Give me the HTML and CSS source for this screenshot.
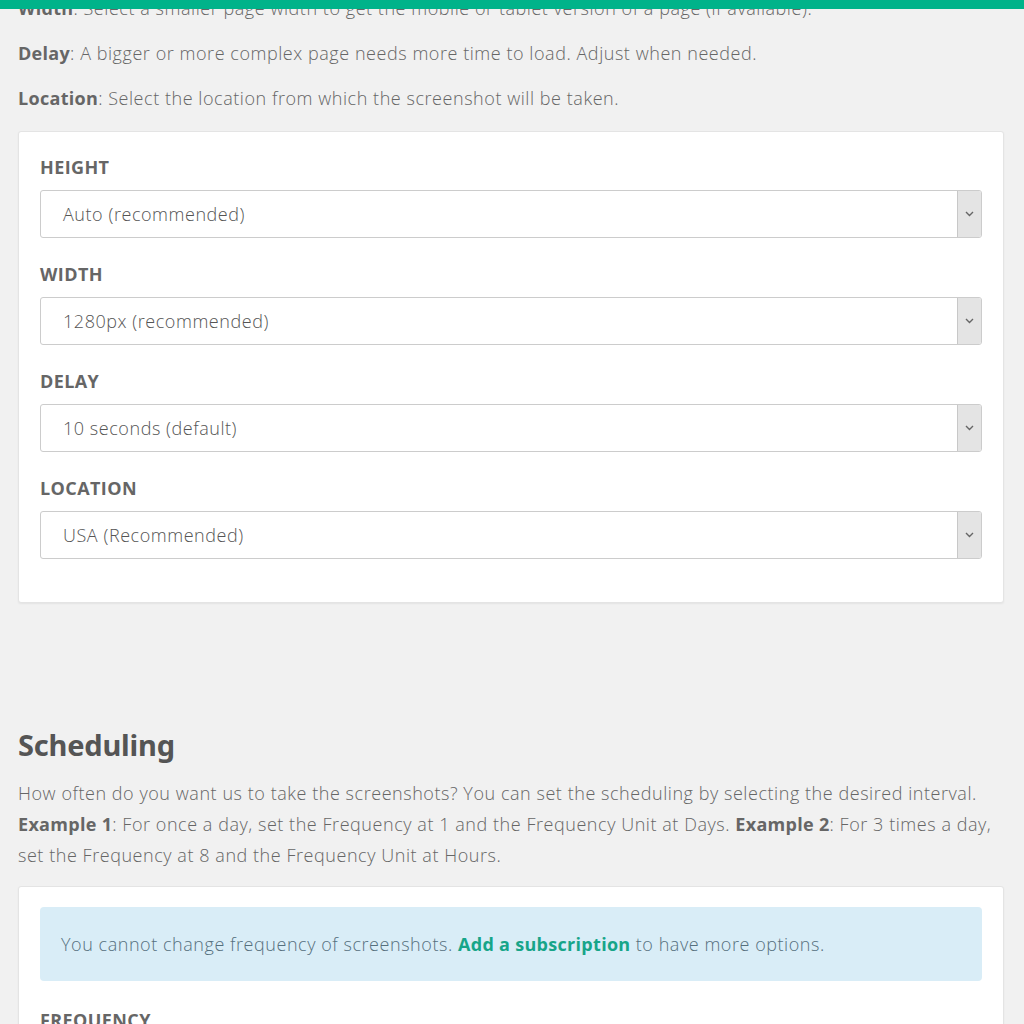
FILE: index.html
```html
<!DOCTYPE html>
<html lang="en">
<head>
    <meta charset="UTF-8">
    <meta name="viewport" content="width=device-width, initial-scale=1.0">
    <title>Screenshot settings</title>
    <link rel="stylesheet" href="styles.css">
</head>
<body>
    <div class="topbar"></div>

    <div class="page">
        <p class="hint"><b>Width</b>: Select a smaller page width to get the mobile or tablet version of a page (if available).</p>
        <p class="hint"><b>Delay</b>: A bigger or more complex page needs more time to load. Adjust when needed.</p>
        <p class="hint"><b>Location</b>: Select the location from which the screenshot will be taken.</p>

        <div class="card">
            <div class="field">
                <label>Height</label>
                <div class="select">
                    <span class="select-value">Auto (recommended)</span>
                    <span class="select-arrow"><svg width="9" height="6" viewBox="0 0 9 6"><path d="M1 1l3.5 3.5L8 1" fill="none" stroke="#666" stroke-width="1.4"/></svg></span>
                </div>
            </div>
            <div class="field">
                <label>Width</label>
                <div class="select">
                    <span class="select-value">1280px (recommended)</span>
                    <span class="select-arrow"><svg width="9" height="6" viewBox="0 0 9 6"><path d="M1 1l3.5 3.5L8 1" fill="none" stroke="#666" stroke-width="1.4"/></svg></span>
                </div>
            </div>
            <div class="field">
                <label>Delay</label>
                <div class="select">
                    <span class="select-value">10 seconds (default)</span>
                    <span class="select-arrow"><svg width="9" height="6" viewBox="0 0 9 6"><path d="M1 1l3.5 3.5L8 1" fill="none" stroke="#666" stroke-width="1.4"/></svg></span>
                </div>
            </div>
            <div class="field">
                <label>Location</label>
                <div class="select">
                    <span class="select-value">USA (Recommended)</span>
                    <span class="select-arrow"><svg width="9" height="6" viewBox="0 0 9 6"><path d="M1 1l3.5 3.5L8 1" fill="none" stroke="#666" stroke-width="1.4"/></svg></span>
                </div>
            </div>
        </div>

        <h2 class="section-title">Scheduling</h2>
        <p class="intro">How often do you want us to take the screenshots? You can set the scheduling by selecting the desired interval.<br>
            <b>Example 1</b>: For once a day, set the Frequency at 1 and the Frequency Unit at Days. <b>Example 2</b>: For 3 times a day, set the Frequency at 8 and the Frequency Unit at Hours.</p>

        <div class="card card-notice">
            <div class="alert"><span>You cannot change frequency of screenshots. <a href="#">Add a subscription</a> to have more options.</span></div>
            <div class="field">
                <label>Frequency</label>
            </div>
        </div>
    </div>
</body>
</html>
```

FILE: styles.css
```css
body {
    margin: 0;
    background-color: #f1f1f1;
    font-family: "Open Sans", Arial, sans-serif;
    font-size: 18px;
    font-weight: 300;
    letter-spacing: 0.55px;
    color: #666;
}
.topbar {
    position: fixed;
    top: 0;
    left: 0;
    right: 0;
    height: 9px;
    background-color: #00b38a;
    z-index: 10;
}
.page {
    padding: 0 20px 0 18px;
    margin-top: -4px;
}
.hint {
    margin: 0 0 21px;
    line-height: 24px;
}
b {
    color: #666;
    font-weight: 700;
    letter-spacing: 0.3px;
}
.card {
    background: #fff;
    border: 1px solid #e4e4e4;
    border-radius: 3px;
    box-shadow: 0 1px 2px rgba(0, 0, 0, 0.06);
    padding: 23px 21px 19px;
}
.card-notice {
    padding-top: 20px;
}
.field {
    margin-bottom: 24px;
}
.field label {
    display: block;
    font-weight: 700;
    letter-spacing: 0.4px;
    text-transform: uppercase;
    color: #666;
    line-height: 24px;
    margin-bottom: 11px;
}
.select {
    display: flex;
    height: 48px;
    border: 1px solid #ccc;
    border-radius: 3px;
    box-sizing: border-box;
    background: #fff;
}
.select-value {
    flex: 1;
    display: flex;
    align-items: center;
    padding-left: 22px;
    color: #555;
}
.select-arrow {
    width: 23px;
    display: flex;
    align-items: center;
    justify-content: center;
    background: #e4e4e4;
    border-left: 1px solid #c8c8c8;
    border-radius: 0 2px 2px 0;
}
.section-title {
    font-family: "Noto Sans", Arial, sans-serif;
    font-size: 29px;
    font-weight: 700;
    letter-spacing: -0.2px;
    color: #555;
    line-height: 36px;
    margin: 124px 0 15px;
}
.intro {
    margin: 0 0 15px;
    line-height: 31px;
}
.alert {
    background: #d9edf7;
    border-radius: 4px;
    color: #56707e;
    padding: 0 21px;
    height: 74px;
    display: flex;
    align-items: center;
    margin-bottom: 27px;
}
.alert a {
    color: #17a589;
    font-weight: 700;
    letter-spacing: 0.3px;
    text-decoration: none;
}
```
